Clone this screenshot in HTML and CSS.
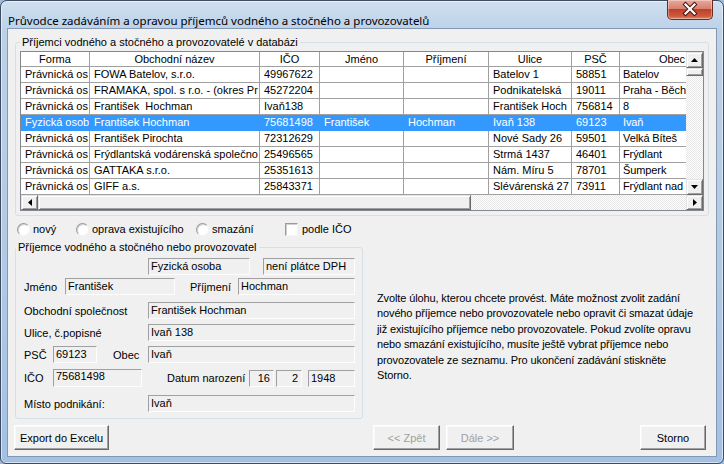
FILE: index.html
```html
<!DOCTYPE html>
<html lang="cs">
<head>
<meta charset="utf-8">
<title>Průvodce</title>
<link rel="stylesheet" href="styles.css">
</head>
<body>
<div class="window">
  <div class="titlebar">
    <span class="title">Průvodce zadáváním a opravou příjemců vodného a stočného a provozovatelů</span>
    <div class="close">
      <svg width="46" height="20" viewBox="0 0 46 20">
        <path d="M18.5 5.5 L27.5 14.5 M27.5 5.5 L18.5 14.5" stroke="#4a1510" stroke-width="4.2" stroke-linecap="square" fill="none"/>
        <path d="M18.5 5.5 L27.5 14.5 M27.5 5.5 L18.5 14.5" stroke="#ffffff" stroke-width="2.2" stroke-linecap="square" fill="none"/>
      </svg>
    </div>
  </div>
  <div class="client">
    <fieldset class="group group-list">
      <legend>Příjemci vodného a stočného a provozovatelé v databázi</legend>
      <div class="listview">
        <div class="lv-main">
          <div class="lv-grid">
            <div class="lv-row lv-head">
              <div class="c">Forma</div><div class="c">Obchodní název</div><div class="c">IČO</div><div class="c">Jméno</div><div class="c">Příjmení</div><div class="c">Ulice</div><div class="c">PSČ</div><div class="c c-last">Obec</div>
            </div>
            <div class="lv-row">
              <div class="c">Právnická os</div><div class="c">FOWA Batelov, s.r.o.</div><div class="c">49967622</div><div class="c"></div><div class="c"></div><div class="c">Batelov 1</div><div class="c">58851</div><div class="c c-last">Batelov</div>
            </div>
            <div class="lv-row">
              <div class="c">Právnická os</div><div class="c">FRAMAKA, spol. s r.o. - (okres Pr</div><div class="c">45272204</div><div class="c"></div><div class="c"></div><div class="c">Podnikatelská</div><div class="c">19011</div><div class="c c-last">Praha - Běch</div>
            </div>
            <div class="lv-row">
              <div class="c">Právnická os</div><div class="c">František&nbsp; Hochman</div><div class="c">Ivaň138</div><div class="c"></div><div class="c"></div><div class="c">František Hoch</div><div class="c">756814</div><div class="c c-last">8</div>
            </div>
            <div class="lv-row is-selected">
              <div class="c">Fyzická osob</div><div class="c">František Hochman</div><div class="c">75681498</div><div class="c">František</div><div class="c">Hochman</div><div class="c">Ivaň 138</div><div class="c">69123</div><div class="c c-last">Ivaň</div>
            </div>
            <div class="lv-row">
              <div class="c">Právnická os</div><div class="c">František Pirochta</div><div class="c">72312629</div><div class="c"></div><div class="c"></div><div class="c">Nové Sady 26</div><div class="c">59501</div><div class="c c-last">Velká Bíteš</div>
            </div>
            <div class="lv-row">
              <div class="c">Právnická os</div><div class="c">Frýdlantská vodárenská společno</div><div class="c">25496565</div><div class="c"></div><div class="c"></div><div class="c">Strmá 1437</div><div class="c">46401</div><div class="c c-last">Frýdlant</div>
            </div>
            <div class="lv-row">
              <div class="c">Právnická os</div><div class="c">GATTAKA s.r.o.</div><div class="c">25351613</div><div class="c"></div><div class="c"></div><div class="c">Nám. Míru 5</div><div class="c">78701</div><div class="c c-last">Šumperk</div>
            </div>
            <div class="lv-row">
              <div class="c">Právnická os</div><div class="c">GIFF a.s.</div><div class="c">25843371</div><div class="c"></div><div class="c"></div><div class="c">Slévárenská 27</div><div class="c">73911</div><div class="c c-last">Frýdlant nad</div>
            </div>
          </div>
          <div class="vscroll">
            <div class="sb-btn"><svg width="7" height="4" viewBox="0 0 7 4"><path d="M3.5 0 L7 4 L0 4 Z" fill="#000"/></svg></div>
            <div class="sb-thumb sb-thumb-v"></div>
            <div class="sb-track"></div>
            <div class="sb-btn"><svg width="7" height="4" viewBox="0 0 7 4"><path d="M0 0 L7 0 L3.5 4 Z" fill="#000"/></svg></div>
          </div>
        </div>
        <div class="hscroll">
          <div class="sb-btn"><svg width="4" height="7" viewBox="0 0 4 7"><path d="M4 0 L4 7 L0 3.5 Z" fill="#000"/></svg></div>
          <div class="sb-thumb sb-thumb-h"></div>
          <div class="sb-track"></div>
          <div class="sb-btn"><svg width="4" height="7" viewBox="0 0 4 7"><path d="M0 0 L4 3.5 L0 7 Z" fill="#000"/></svg></div>
        </div>
      </div>
    </fieldset>

    <div class="options">
      <label class="opt opt-new"><span class="radio"></span>nový</label>
      <label class="opt opt-edit"><span class="radio"></span>oprava existujícího</label>
      <label class="opt opt-del"><span class="radio"></span>smazání</label>
      <label class="opt opt-ico"><span class="check"></span>podle IČO</label>
    </div>

    <div class="middle">
      <fieldset class="group group-detail">
        <legend>Příjemce vodného a stočného nebo provozovatel</legend>
        <div class="frow row-a">
          <div class="box b-type">Fyzická osoba</div>
          <div class="box b-dph">není plátce DPH</div>
        </div>
        <div class="frow row-b">
          <span class="lbl l-jmeno">Jméno</span>
          <div class="box b-jmeno">František</div>
          <span class="lbl l-prijmeni">Příjmení</span>
          <div class="box b-prijmeni">Hochman</div>
        </div>
        <div class="frow row-c">
          <span class="lbl l-wide">Obchodní společnost</span>
          <div class="box b-wide">František Hochman</div>
        </div>
        <div class="frow row-d">
          <span class="lbl l-wide">Ulice, č.popisné</span>
          <div class="box b-wide">Ivaň 138</div>
        </div>
        <div class="frow row-e">
          <span class="lbl l-short">PSČ</span>
          <div class="box b-psc">69123</div>
          <span class="lbl l-obec">Obec</span>
          <div class="box b-wide">Ivaň</div>
        </div>
        <div class="frow row-f">
          <span class="lbl l-short">IČO</span>
          <div class="box b-ico">75681498</div>
          <span class="lbl l-datum">Datum narození</span>
          <div class="box b-day">16</div>
          <div class="box b-month">2</div>
          <div class="box b-year">1948</div>
        </div>
        <div class="frow row-g">
          <span class="lbl l-wide">Místo podnikání:</span>
          <div class="box b-wide">Ivaň</div>
        </div>
      </fieldset>
      <p class="hint">Zvolte úlohu, kterou chcete provést. Máte možnost zvolit zadání<br>nového příjemce nebo provozovatele nebo opravit či smazat údaje<br>již existujícího příjemce nebo provozovatele. Pokud zvolíte opravu<br>nebo smazání existujícího, musíte ještě vybrat příjemce nebo<br>provozovatele ze seznamu. Pro ukončení zadávání stiskněte<br>Storno.</p>
    </div>

    <div class="buttons">
      <button class="btn btn-export">Export do Excelu</button>
      <button class="btn btn-back" disabled>&lt;&lt; Zpět</button>
      <button class="btn btn-next" disabled>Dále &gt;&gt;</button>
      <button class="btn btn-cancel">Storno</button>
    </div>
  </div>
</div>
</body>
</html>
```

FILE: styles.css
```css
html, body {
  margin: 0;
  padding: 0;
}
body {
  width: 724px;
  height: 464px;
  overflow: hidden;
  background: #9fb9d6;
  font: 11px "Liberation Sans", Arial, sans-serif;
  color: #000;
}

.window {
  box-sizing: border-box;
  width: 724px;
  height: 464px;
  border: 1px solid #3d4c60;
  border-radius: 7px 7px 6px 6px;
  background: linear-gradient(180deg, #cfdfef 0px, #bcd1e8 30px, #b0c9e4 60%, #a3c0e4 100%);
  padding: 0 6px 6px 6px;
  display: flex;
  flex-direction: column;
  box-shadow: inset 0 0 0 1px rgba(255,255,255,0.55);
}

.titlebar {
  height: 27px;
  display: flex;
  align-items: flex-start;
  flex: none;
}
.title {
  margin: 12px 0 0 1px;
  font: 11.5px "Noto Sans", "Open Sans", sans-serif;
  line-height: 15px;
  color: #000;
  white-space: nowrap;
}
.close {
  margin: -1px 4px 0 auto;
  width: 46px;
  height: 20px;
  box-sizing: border-box;
  border: 1px solid #6b2a22;
  border-top: none;
  border-radius: 0 0 5px 5px;
  background: linear-gradient(180deg, #e9a99b 0%, #d7816f 45%, #c0402c 50%, #cc5a3d 85%, #e2896a 100%);
  box-shadow: inset 0 0 0 1px rgba(255,255,255,0.35);
}
.close svg { display: block; margin: -1px 0 0 -1px; }

.client {
  flex: 1;
  background: #f0f0f0;
  border: 1px solid #8398b3;
  display: flex;
  flex-direction: column;
  min-height: 0;
}

/* group boxes */
.group {
  margin: 0;
  border: 1px solid #d5dfe5;
  border-radius: 3px;
  min-width: 0;
  box-sizing: border-box;
}
.group legend {
  padding: 0 2px;
  line-height: 13px;
  font-size: 11px;
}

.group-list {
  margin: 7px 7px 0 7px;
  padding: 0 3px 4px 4px;
}

/* list view */
.listview {
  margin-top: 2px;
  width: 684px;
  height: 160px;
  box-sizing: border-box;
  border: 1px solid #828790;
  background: #fff;
  display: flex;
  flex-direction: column;
}
.lv-main {
  display: flex;
  height: 143px;
}
.lv-grid {
  width: 665px;
  overflow: hidden;
}
.lv-row {
  display: grid;
  grid-template-columns: 69px 170px 60px 84px 85px 83px 48px 66px;
  height: 16px;
  box-sizing: border-box;
  border-bottom: 1px solid #a0a0a0;
}
.lv-row .c {
  border-right: 1px solid #a0a0a0;
  padding-left: 4px;
  line-height: 15px;
  white-space: nowrap;
  overflow: hidden;
}
.lv-row .c-last { border-right: none; padding-left: 3px; letter-spacing: -0.1px; }
.lv-head {
  height: 15px;
  background: #fff;
  border-bottom: 1px solid #a0a0a0;
}
.lv-head .c {
  text-align: center;
  padding-left: 0;
  line-height: 14px;
}
.lv-head .c-last {
  text-align: right;
  padding-right: 1px;
}
.lv-row.is-selected {
  background: #3399ff;
  color: #fff;
  border-bottom-color: #3399ff;
}
.lv-row.is-selected .c { border-right-color: #3399ff; }

/* scrollbars */
.vscroll {
  width: 17px;
  display: flex;
  flex-direction: column;
}
.hscroll {
  height: 15px;
  display: flex;
}
.sb-btn, .sb-thumb {
  box-sizing: border-box;
  background: #f0f0f0;
  border: 1px solid;
  border-color: #e3e3e3 #696969 #696969 #e3e3e3;
  box-shadow: inset 1px 1px #fff, inset -1px -1px #a0a0a0;
  flex: none;
}
.sb-btn {
  display: flex;
  align-items: center;
  justify-content: center;
}
.sb-btn svg { display: block; }
.vscroll .sb-btn { height: 16px; }
.hscroll .sb-btn { width: 17px; }
.sb-thumb-v { height: 8px; }
.sb-thumb-h { width: 433px; }
.sb-track {
  flex: 1;
  background: repeating-conic-gradient(#ffffff 0 25%, #e6e6e6 0 50%) 0 0 / 2px 2px;
}

/* options */
.options {
  margin-top: 6px;
  height: 14px;
  display: flex;
  align-items: center;
  padding-left: 9px;
}
.opt {
  display: flex;
  align-items: center;
  gap: 3px;
  white-space: nowrap;
}
.opt-new { width: 59px; }
.opt-edit { width: 120px; }
.opt-del { width: 89px; }
.radio {
  width: 13px;
  height: 13px;
  box-sizing: border-box;
  border-radius: 50%;
  border: 1px solid;
  border-color: #9a9a9a #f4f4f4 #f4f4f4 #9a9a9a;
  background: #fff;
  box-shadow: inset 1px 1px #d0d0d0;
}
.check {
  width: 13px;
  height: 13px;
  box-sizing: border-box;
  border: 1px solid;
  border-color: #9a9a9a #f4f4f4 #f4f4f4 #9a9a9a;
  background: #fff;
  box-shadow: inset 1px 1px #d0d0d0;
  margin-right: 1px;
}

/* middle */
.middle {
  margin-top: 5px;
  display: flex;
  align-items: flex-start;
}
.group-detail {
  margin: 0 0 0 7px;
  width: 348px;
  height: 178px;
  padding: 0;
}
.hint {
  margin: 50px 0 0 14px;
  line-height: 15.4px;
  letter-spacing: -0.12px;
  white-space: nowrap;
}

/* detail rows */
.frow {
  display: flex;
  align-items: center;
  height: 17px;
}
.row-a { margin-top: 4px; }
.row-b { margin-top: 3px; }
.row-c { margin-top: 7px; }
.row-d { margin-top: 5px; }
.row-e { margin-top: 5px; }
.row-f { margin-top: 6px; height: 18px; }
.row-g { margin-top: 8px; }

.lbl { white-space: nowrap; flex: none; }
.l-jmeno { margin-left: 8px; width: 41px; }
.l-prijmeni { margin-left: 15px; width: 48px; }
.l-wide { margin-left: 8px; width: 124px; }
.l-short { margin-left: 8px; width: 29px; }
.l-obec { margin-left: 16px; width: 35px; }
.l-datum { margin-left: 25px; width: 82px; }

.box {
  box-sizing: border-box;
  height: 17px;
  border: 1px solid;
  border-color: #a0a0a0 #fdfdfd #fdfdfd #a0a0a0;
  background: #f0f0f0;
  padding-left: 2px;
  line-height: 15px;
  white-space: nowrap;
  overflow: hidden;
  flex: none;
}
.b-type { margin-left: 132px; width: 102px; }
.b-dph { margin-left: 13px; width: 92px; }
.b-jmeno { width: 110px; }
.b-prijmeni { width: 117px; }
.b-wide { width: 207px; }
.b-psc { width: 44px; }
.b-ico { width: 89px; height: 18px; line-height: 13px; }
.b-day { width: 25px; text-align: right; padding-right: 3px; }
.b-month { margin-left: 2px; width: 26px; text-align: right; padding-right: 3px; }
.b-year { margin-left: 6px; width: 47px; }

/* buttons */
.buttons {
  margin-top: 6px;
  display: flex;
  height: 25px;
}
.btn {
  box-sizing: border-box;
  height: 25px;
  margin: 0;
  padding: 0;
  font: 11px "Liberation Sans", Arial, sans-serif;
  color: #000;
  background: #f0f0f0;
  border: 1px solid;
  border-color: #fff #696969 #696969 #fff;
  box-shadow: inset -1px -1px #a0a0a0, inset 1px 1px #f8f8f8;
  border-radius: 0;
}
.btn:disabled { color: #a0a0a0; }
.btn-export { margin-left: 6px; width: 95px; }
.btn-back { margin-left: 264px; width: 67px; }
.btn-next { margin-left: 6px; width: 68px; }
.btn-cancel { margin-left: auto; margin-right: 10px; width: 66px; }
```
